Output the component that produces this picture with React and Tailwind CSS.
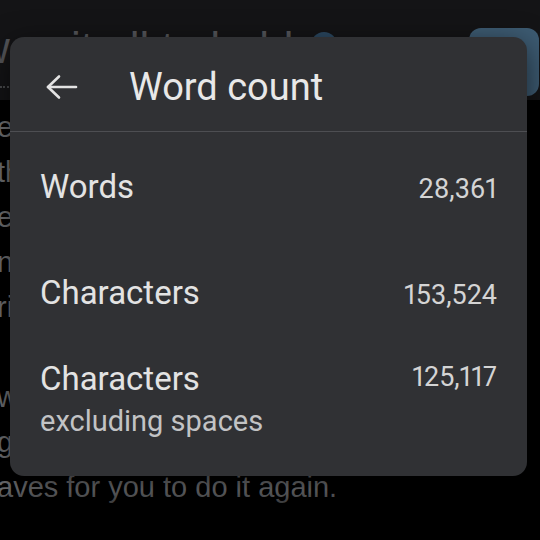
export default function App() {
  const bodyLines = [
    'everything you wrote',
    'the story you keep',
    'every time you open',
    'nothing gets lost',
    'right where it',
    '',
    'when you come',
    'going back and',
  ];

  return (
    <div className="relative w-[540px] h-[540px] overflow-hidden bg-black font-['Liberation_Sans',Arial,sans-serif]">
      {/* page behind the dialog */}
      <div className="h-[100px] bg-[#141416] flex justify-between items-start">
        <div className="pt-[22px]">
          <div className="-ml-[22px] text-[44px] leading-[52px] text-[#55565a] whitespace-nowrap">
            won it all to held
          </div>
          <div className="mt-[12px] w-[12px] border-b-2 border-dotted border-[#4a4b4e]" />
        </div>
        <div className="flex items-start gap-[132px] pt-[28px]">
          <div className="mt-[4px] w-[26px] h-[26px] rounded-full bg-[#2b4860]" />
          <div className="w-[70px] h-[68px] rounded-[12px] bg-[#3d5b72] mr-[1px]" />
        </div>
      </div>

      <div className="pt-[5px] -ml-[3px] text-[29px] leading-[45px] text-[#707174] whitespace-nowrap">
        {bodyLines.map((line, i) => (
          <div key={i} className="h-[45px]">{line}</div>
        ))}
        <div className="h-[45px] text-[#6c6d70]">aves for you to do it again.</div>
      </div>

      <div className="absolute left-0 right-0 bottom-0 h-[50px] bg-[linear-gradient(to_bottom,rgba(0,0,0,0),#000_60%)]" />

      {/* Word count dialog */}
      <div className="absolute z-10 left-[10px] top-[37px] w-[517px] h-[439px] rounded-[14px] bg-[#303134] shadow-[0_8px_30px_rgba(0,0,0,0.6)] font-['Roboto',sans-serif]">
        <div className="h-[95px] flex items-center pt-[6px] pl-[36px] border-b border-[#4d4e52]">
          <svg width="32" height="26" viewBox="0 0 32 26" fill="none" stroke="#e3e3e3" strokeWidth="2.6" strokeLinecap="round" strokeLinejoin="round">
            <path d="M2 13H30" />
            <path d="M13 2.5L2 13L13 23.5" />
          </svg>
          <div className="ml-[51px] text-[38px] leading-[44px] text-[#e8e8e8]">Word count</div>
        </div>

        <div className="px-[30px] pt-[36px]">
          <div className="flex justify-between items-baseline">
            <div className="text-[33px] leading-[38px] text-[#e3e3e3]">Words</div>
            <div className="text-[27px] leading-[38px] text-[#d4d4d4] proportional-nums">28,361</div>
          </div>

          <div className="mt-[66px] flex justify-between items-baseline">
            <div className="text-[33px] leading-[38px] text-[#e3e3e3]">Characters</div>
            <div className="text-[27px] leading-[38px] text-[#d4d4d4] proportional-nums">153,524</div>
          </div>

          <div className="mt-[46px] flex justify-between items-start">
            <div>
              <div className="text-[33px] leading-[38px] text-[#e3e3e3]">Characters</div>
              <div className="mt-[6px] text-[29px] leading-[34px] text-[#c2c3c5]">excluding spaces</div>
            </div>
            <div className="-mt-[2px] text-[27px] leading-[38px] text-[#d4d4d4] proportional-nums">125,117</div>
          </div>
        </div>
      </div>
    </div>
  );
}
